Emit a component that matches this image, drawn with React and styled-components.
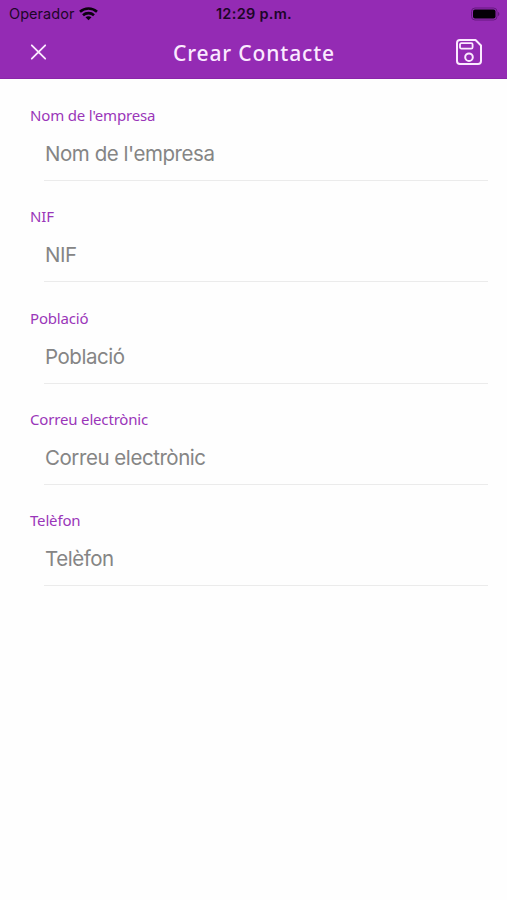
import React, { useState } from 'react';
import styled, { createGlobalStyle } from 'styled-components';

const GlobalStyle = createGlobalStyle`
  * {
    box-sizing: border-box;
  }
  body {
    margin: 0;
    background: #fefefe;
  }
`;

const Screen = styled.div`
  min-height: 900px;
  width: 100%;
  background: #fefefe;
`;

const Header = styled.header`
  height: 79px;
  background: #942bb4;
  border-bottom: 1px solid #8a25a9;
`;

const StatusBar = styled.div`
  display: grid;
  grid-template-columns: 1fr auto 1fr;
  align-items: center;
  height: 27px;
  padding: 0 7px 0 9px;
  font-family: Inter, 'Liberation Sans', sans-serif;
  font-size: 14.5px;
  line-height: 27px;
  color: #1d0628;
`;

const Carrier = styled.div`
  display: flex;
  align-items: center;
  gap: 5px;
  letter-spacing: 0.05px;
`;

const Clock = styled.div`
  margin-right: 1px;
  font-weight: 600;
  letter-spacing: 0.3px;
`;

const Battery = styled.div`
  display: flex;
  justify-content: flex-end;
`;

const NavBar = styled.nav`
  display: grid;
  grid-template-columns: 60px 1fr 60px;
  align-items: center;
  height: 51px;
  padding: 0 8px;
`;

const IconButton = styled.button`
  display: flex;
  align-items: center;
  justify-content: center;
  height: 46px;
  padding: 0 0 2px;
  border: 0;
  background: none;
  color: #fbeaff;
  cursor: pointer;
`;

const Title = styled.h1`
  margin: 0;
  padding-left: 1px;
  font-family: 'Noto Sans', sans-serif;
  font-size: 21px;
  font-weight: 500;
  line-height: 28px;
  letter-spacing: 0.85px;
  text-align: center;
  color: #fbeaff;
`;

const Form = styled.form`
  display: flex;
  flex-direction: column;
  padding: 26px 19px 0 30px;
`;

const Field = styled.div`
  display: flex;
  flex-direction: column;
  height: 101.3px;
`;

const Label = styled.label`
  font-family: 'Noto Sans', sans-serif;
  font-size: 15px;
  line-height: 20px;
  letter-spacing: -0.17px;
  color: #9a36b9;
`;

const Input = styled.input`
  height: 56px;
  margin-left: 14px;
  padding: 2px 0 0 1px;
  border: 0;
  border-bottom: 1px solid #ebebeb;
  outline: none;
  background: none;
  font-family: Inter, 'Liberation Sans', sans-serif;
  font-size: 20.5px;
  letter-spacing: -0.45px;
  color: #333;

  &::placeholder {
    color: #858585;
    opacity: 1;
  }
`;

const fields = [
  { name: 'company', label: "Nom de l'empresa" },
  { name: 'nif', label: 'NIF' },
  { name: 'city', label: 'Població' },
  { name: 'email', label: 'Correu electrònic' },
  { name: 'phone', label: 'Telèfon' },
];

const WifiIcon = () => (
  <svg width="19" height="14" viewBox="0 0 19 14" fill="none" stroke="#0b020f" strokeWidth="2.6">
    <path d="M1 4.8C5.8 0.4 13.2 0.4 18 4.8" />
    <path d="M4 8.2C7.1 5.4 11.9 5.4 15 8.2" />
    <path d="M9.5 13.2L6.5 10.3C8.2 8.9 10.8 8.9 12.5 10.3Z" fill="#0b020f" stroke="none" />
  </svg>
);

const BatteryIcon = () => (
  <svg width="30" height="14" viewBox="0 0 30 14">
    <rect x="1.5" y="1" width="25.5" height="12" rx="3.5" fill="none" stroke="#661980" />
    <rect x="3" y="2.5" width="22.5" height="9" rx="2" fill="#050007" />
    <path d="M28 5C29.8 5.5 29.8 8.5 28 9Z" fill="#661980" />
  </svg>
);

const CloseIcon = () => (
  <svg width="17" height="16" viewBox="0 0 17 16" stroke="currentColor" strokeWidth="1.8" strokeLinecap="round">
    <path d="M1.8 1.3L15.2 14.7M15.2 1.3L1.8 14.7" />
  </svg>
);

const SaveIcon = () => (
  <svg width="28" height="28" viewBox="0 0 28 28" fill="none" stroke="currentColor" strokeWidth="2" strokeLinejoin="round">
    <path d="M5 2H20.5L26 7.5V23Q26 26 23 26H5Q2 26 2 23V5Q2 2 5 2Z" />
    <rect x="5" y="5.2" width="12.6" height="5.4" rx="1.4" strokeWidth="1.8" />
    <circle cx="14" cy="19.2" r="3.8" />
  </svg>
);

const App = () => {
  const [values, setValues] = useState({});
  const handleChange = (e) => {
    setValues({ ...values, [e.target.name]: e.target.value });
  };

  return (
    <Screen>
      <GlobalStyle />
      <Header>
        <StatusBar>
          <Carrier>
            Operador
            <WifiIcon />
          </Carrier>
          <Clock>12:29 p.m.</Clock>
          <Battery>
            <BatteryIcon />
          </Battery>
        </StatusBar>
        <NavBar>
          <IconButton type="button">
            <CloseIcon />
          </IconButton>
          <Title>Crear Contacte</Title>
          <IconButton type="submit" form="contact">
            <SaveIcon />
          </IconButton>
        </NavBar>
      </Header>
      <Form id="contact" onSubmit={(e) => e.preventDefault()}>
        {fields.map(({ name, label }) => (
          <Field key={name}>
            <Label htmlFor={name}>{label}</Label>
            <Input
              id={name}
              name={name}
              placeholder={label}
              value={values[name] || ''}
              onChange={handleChange}
            />
          </Field>
        ))}
      </Form>
    </Screen>
  );
};

export default App;
